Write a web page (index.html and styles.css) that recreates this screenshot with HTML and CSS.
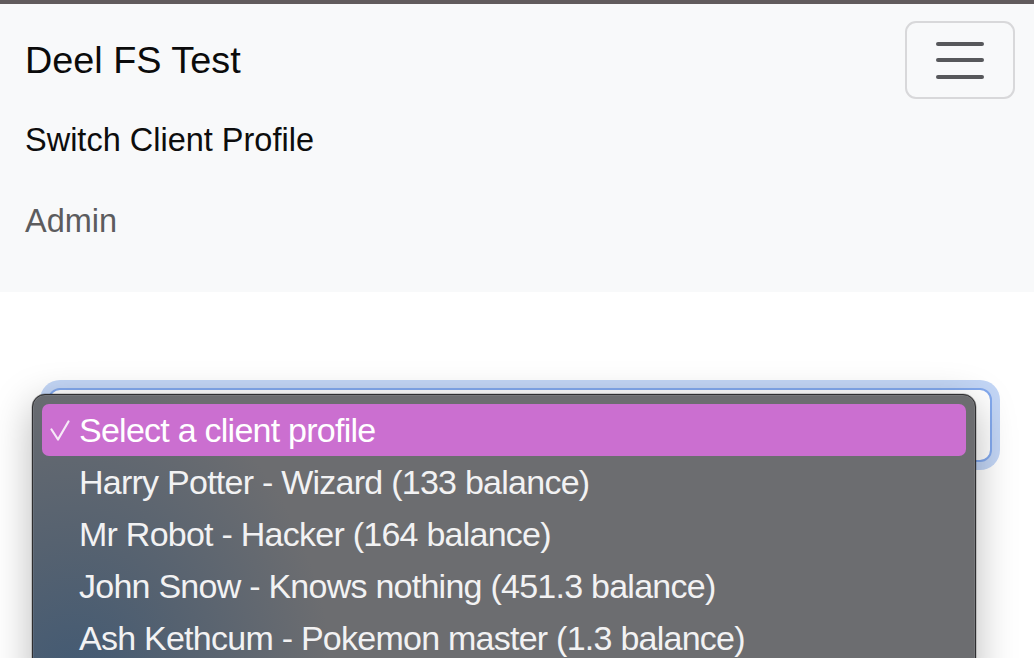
FILE: index.html
```html
<!DOCTYPE html>
<html lang="en">
<head>
<meta charset="utf-8">
<title>Deel FS Test</title>
<link rel="stylesheet" href="styles.css">
</head>
<body>
<div class="topbar"></div>
<nav class="navbar">
  <div class="navbar-top">
    <span class="brand">Deel FS Test</span>
    <button class="toggler" aria-label="Toggle navigation">
      <span class="bar"></span><span class="bar"></span><span class="bar"></span>
    </button>
  </div>
  <ul class="nav-links">
    <li class="nav-link">Switch Client Profile</li>
    <li class="nav-link muted">Admin</li>
  </ul>
</nav>
<main class="main">
  <div class="select-wrap">
    <div class="select"></div>
    <div class="popup">
      <div class="option selected">
        <svg class="check" width="20" height="22" viewBox="0 0 20 22"><polyline points="1.5,9.5 8,19.5 18.5,1.5" fill="none" stroke="#f6eaf7" stroke-width="2.2" stroke-linecap="round" stroke-linejoin="round"/></svg>
        <span>Select a client profile</span>
      </div>
      <div class="option">Harry Potter - Wizard (133 balance)</div>
      <div class="option">Mr Robot - Hacker (164 balance)</div>
      <div class="option">John Snow - Knows nothing (451.3 balance)</div>
      <div class="option">Ash Kethcum - Pokemon master (1.3 balance)</div>
    </div>
  </div>
</main>
</body>
</html>
```

FILE: styles.css
```css
html, body {
  margin: 0;
  padding: 0;
  background: #ffffff;
  overflow: hidden;
}
body {
  font-family: "Liberation Sans", Arial, sans-serif;
  width: 1034px;
  height: 658px;
}
.topbar {
  height: 4px;
  background: #615b5d;
}
.navbar {
  background: #f8f9fa;
  height: 288px;
  box-sizing: border-box;
  padding: 17px 19px 0 25px;
}
.navbar-top {
  display: flex;
  justify-content: space-between;
  align-items: center;
  height: 78px;
}
.brand {
  font-size: 37.8px;
  color: #0b0b0b;
  line-height: 1;
  margin-top: 2px;
}
.toggler {
  width: 110px;
  height: 78px;
  box-sizing: border-box;
  border: 2px solid #d8d8da;
  border-radius: 11px;
  background: transparent;
  display: flex;
  flex-direction: column;
  align-items: center;
  justify-content: center;
  gap: 12.5px;
  padding: 0;
}
.bar {
  display: block;
  width: 48px;
  height: 4px;
  border-radius: 2px;
  background: #57585b;
}
.nav-links {
  list-style: none;
  margin: 0;
  padding: 1px 0 0 0;
}
.nav-link {
  height: 81px;
  line-height: 81px;
  font-size: 32.5px;
  color: #0d0d0d;
}
.nav-link.muted {
  color: #5c5c5e;
}
.main {
  height: 366px;
  box-sizing: border-box;
  overflow: hidden;
  padding: 96px 42px 0 48px;
}
.select-wrap {
  position: relative;
}
.select {
  height: 74px;
  box-sizing: border-box;
  border: 2px solid #83a9ee;
  border-radius: 12px;
  background: #ffffff;
  box-shadow: 0 0 0 8px #c3d6f6;
}
.popup {
  position: absolute;
  left: -16px;
  top: 6px;
  width: 944px;
  height: 300px;
  box-sizing: border-box;
  border: 1px solid #2e2e30;
  border-radius: 13px;
  padding: 9px;
  background:
    radial-gradient(ellipse 260px 330px at 40px 300px, rgba(62,88,116,0.95) 0%, rgba(70,90,112,0.6) 45%, rgba(108,109,112,0) 100%),
    #6c6d70;
  box-shadow: 0 10px 40px rgba(0,0,0,0.28), 0 0 0 0.5px rgba(0,0,0,0.3), inset 0 0 0 1px rgba(255,255,255,0.08);
}
.option {
  height: 52px;
  display: flex;
  align-items: center;
  padding-left: 37px;
  font-size: 34px;
  letter-spacing: -0.75px;
  color: #f2f2f3;
  white-space: nowrap;
}
.option.selected {
  background: #cb6fd0;
  border-radius: 7px;
  padding-left: 8px;
  color: #ffffff;
}
.check {
  width: 20px;
  height: 22px;
  margin-right: 9px;
  margin-top: 2px;
}
```
